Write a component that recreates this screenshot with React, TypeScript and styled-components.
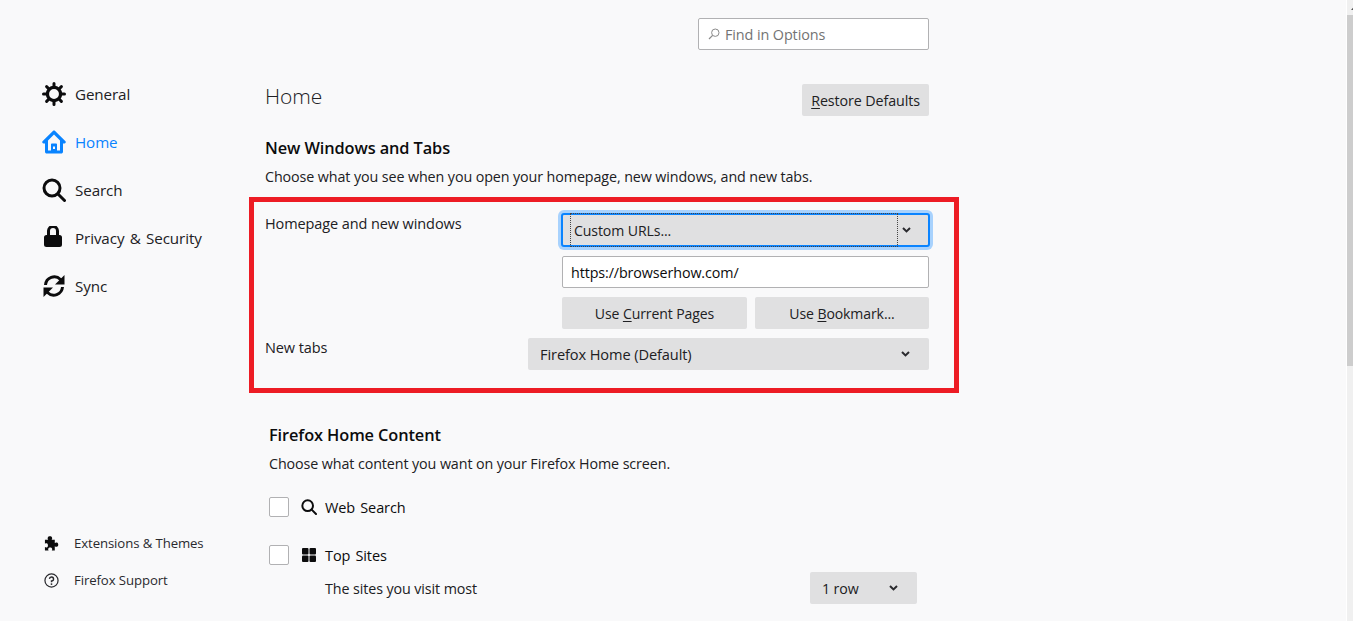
import React from 'react';
import styled, { createGlobalStyle } from 'styled-components';

const Global = createGlobalStyle`
  html, body { margin: 0; padding: 0; height: 621px; overflow: hidden; background: #f9f9fa; }
  body { font-family: "Open Sans", "Noto Sans", "Liberation Sans", sans-serif; color: #0c0c0d; }
  * { box-sizing: border-box; }
`;

const Page = styled.div`
  position: relative;
  display: flex;
  width: 1353px;
  height: 621px;
  overflow: hidden;
  background: #f9f9fa;
  font-size: 14px;
  letter-spacing: -0.1px;
`;

const Sidebar = styled.nav`
  flex: 0 0 265px;
  display: flex;
  flex-direction: column;
  justify-content: space-between;
  padding: 70px 0 29px 42px;
`;

const NavGroup = styled.div`
  display: flex;
  flex-direction: column;
`;

const NavItem = styled.div<{ $active?: boolean }>`
  display: flex;
  align-items: center;
  height: 48px;
  font-size: 15.2px;
  word-spacing: 1.5px;
  color: ${p => (p.$active ? '#0a84ff' : '#202023')};
`;

const NavIcon = styled.span`
  flex: 0 0 33px;
  display: flex;
  align-items: center;
`;

const FooterGroup = styled.div`
  display: flex;
  flex-direction: column;
  gap: 13px;
`;

const FooterItem = styled.div`
  display: flex;
  align-items: center;
  height: 24px;
  font-size: 13.2px;
  color: #2a2a2e;
`;

const FooterIcon = styled.span`
  flex: 0 0 32px;
  display: flex;
  align-items: center;
  padding-left: 2px;
`;

const Main = styled.main`
  flex: 0 0 664px;
  display: flex;
  flex-direction: column;
  padding-top: 18px;
`;

const SearchBox = styled.div`
  align-self: flex-end;
  display: flex;
  align-items: center;
  gap: 5px;
  width: 231px;
  height: 32px;
  padding-left: 9px;
  background: #fff;
  border: 1px solid #b1b1b3;
  border-radius: 2px;
  font-size: 14.4px;
  color: #737373;
`;

const TitleRow = styled.div`
  display: flex;
  justify-content: space-between;
  align-items: center;
  margin-top: 34px;
  height: 32px;
`;

const PageTitle = styled.h1`
  margin: 0 0 8px;
  font-size: 21px;
  font-weight: 300;
  color: #202023;
`;

const Button = styled.button<{ $grow?: number }>`
  ${p => (p.$grow ? `flex: 0 0 ${p.$grow}px;` : '')}
  height: 32px;
  padding: 0 9px;
  border: 0;
  border-radius: 2px;
  background: #e0e0e1;
  color: #202023;
  font: inherit;
  font-size: 14.3px;
  letter-spacing: -0.1px;
  u { text-underline-offset: 2px; }
`;

const SectionHeading = styled.h2<{ $indent?: number; $top: number }>`
  margin: ${p => p.$top}px 0 0 ${p => p.$indent ?? 0}px;
  font-size: 16.35px;
  line-height: 24px;
  font-weight: 600;
  color: #0c0c0d;
`;

const Description = styled.p<{ $indent?: number }>`
  margin: 6px 0 0 ${p => p.$indent ?? 0}px;
  font-size: 14.3px;
  line-height: 22px;
  color: #202023;
`;

const HomeGrid = styled.div`
  display: grid;
  grid-template-columns: 263px 34px 367px;
  margin-top: 26px;
`;

const RowLabel = styled.div<{ $row: number }>`
  grid-column: 1;
  grid-row: ${p => p.$row};
  font-size: 14.5px;
  line-height: 20px;
  color: #202023;
`;

const SelectBase = styled.div`
  position: relative;
  display: flex;
  align-items: center;
  justify-content: space-between;
  height: 32px;
  border-radius: 2px;
  background: #e0e0e1;
  font-size: 14px;
  color: #202023;
`;

const FocusSelect = styled(SelectBase)`
  grid-column: 3;
  grid-row: 1;
  height: 34px;
  margin: -1px;
  border: 2px solid #0a84ff;
  border-radius: 3px;
  box-shadow: 0 0 0 3px #a8d2fd;
  padding-left: 11px;
  font-size: 14.1px;
`;

const FocusInner = styled.span`
  position: absolute;
  left: 7px;
  right: 30px;
  top: -2px;
  bottom: -2px;
  border: 1px dotted #444;
`;

const InlineArrow = styled.span`
  display: flex;
  width: 30px;
  justify-content: center;
  padding-right: 14px;
`;

const UrlInput = styled.div`
  grid-column: 3;
  grid-row: 2;
  display: flex;
  align-items: center;
  height: 32px;
  margin-top: 10px;
  padding-left: 8px;
  background: #fff;
  border: 1px solid #b1b1b3;
  border-radius: 2px;
  font-size: 14.3px;
  color: #0c0c0d;
`;

const ButtonRow = styled.div`
  grid-column: 3;
  grid-row: 3;
  display: flex;
  justify-content: space-between;
  margin-top: 9px;
  button { font-size: 14.05px; }
`;

const NewTabsSelect = styled(SelectBase)`
  grid-column: 2 / 4;
  grid-row: 4;
  margin-top: 9px;
  padding: 0 19px 0 12px;
  font-size: 14.6px;
`;

const NewTabsLabel = styled(RowLabel)`
  margin-top: 9px;
`;

const CheckRow = styled.div<{ $top: number }>`
  display: flex;
  align-items: center;
  height: 20px;
  margin: ${p => p.$top}px 0 0 4px;
  font-size: 14.5px;
  font-weight: 500;
  word-spacing: 1.5px;
  color: #0c0c0d;
`;

const Checkbox = styled.span`
  flex: 0 0 20px;
  height: 20px;
  background: #fff;
  border: 1px solid #b1b1b3;
  border-radius: 2px;
  margin-right: 12px;
`;

const CheckIcon = styled.span`
  flex: 0 0 24px;
  display: flex;
  align-items: center;
`;

const SubRow = styled.div`
  display: flex;
  align-items: center;
  justify-content: space-between;
  margin: 7px 12px 0 60px;
  font-size: 14.3px;
  color: #202023;
`;

const RowSelect = styled(SelectBase)`
  width: 107px;
  padding: 0 19px 0 12px;
  font-size: 14.2px;
`;

const ScrollTrack = styled.div`
  position: absolute;
  top: 0;
  right: 0;
  bottom: 0;
  width: 7px;
  border-left: 1px solid #fff;
  background: #f0f0f0;
  display: flex;
  flex-direction: column;
`;

const ScrollButton = styled.div`
  height: 15px;
  overflow: hidden;
`;

const ScrollThumb = styled.div`
  height: 351px;
  background: #cdcdcd;
`;

const Annotation = styled.div`
  position: absolute;
  left: 249px;
  top: 197px;
  width: 710px;
  height: 196px;
  border: 5px solid #ed1c24;
  pointer-events: none;
`;

const Chevron = () => (
  <svg width="9" height="6" viewBox="0 0 9 6">
    <path d="M1 1 4.500 4.400 8 1" fill="none" stroke="#2a2a2e" strokeWidth="2" />
  </svg>
);

const Gear = () => (
  <svg width="24" height="24" viewBox="0 0 24 24" fill="none" stroke="#0c0c0d">
    <circle cx="12" cy="12" r="6.600" strokeWidth="3.300" />
    <path
      d="M12 5V1.500M12 19v3.500M5 12H1.500M19 12h3.500M7 7 4.600 4.600M17 7l2.400-2.400M7 17l-2.400 2.400M17 17l2.400 2.400"
      strokeWidth="3"
      strokeLinecap="round"
    />
  </svg>
);

const HomeIcon = () => (
  <svg width="24" height="24" viewBox="0 0 24 24">
    <path
      fill="#0a84ff"
      fillRule="evenodd"
      d="M12 .5c.4 0 .8.2 1.100.4l10.400 10.400c.6.700.2 2.200-1 2.200H21v8.200c0 1-.8 1.800-1.800 1.800H4.800C3.800 23.500 3 22.700 3 21.700v-8.200H1.500c-1.200 0-1.600-1.500-1-2.200L10.900.9c.3-.2.700-.4 1.100-.4zM12 4.500 6 10.500V20.500h3v-6c0-.6.500-1 1-1h4c.5 0 1 .4 1 1v6h3V10.500zM11 16.500v2.500h2v-2.500z"
    />
  </svg>
);

const SearchIcon = ({ size = 24 }: { size?: number }) => (
  <svg width={size} height={size} viewBox="0 0 24 24">
    <circle cx="10" cy="10" r="8" fill="none" stroke="#0c0c0d" strokeWidth="3" />
    <path d="M16 16l6.500 6.500" stroke="#0c0c0d" strokeWidth="3" strokeLinecap="round" />
  </svg>
);

const LockIcon = () => (
  <svg width="24" height="24" viewBox="0 2 24 24">
    <path
      fill="#0c0c0d"
      fillRule="evenodd"
      d="M11 1a6 6 0 0 0-6 6v4H4.500A2.500 2.500 0 0 0 2 13.500v7A2.500 2.500 0 0 0 4.500 23h13a2.500 2.500 0 0 0 2.500-2.500v-7a2.500 2.500 0 0 0-2.500-2.500H17V7a6 6 0 0 0-6-6zm0 3a3 3 0 0 1 3 3v4H8V7a3 3 0 0 1 3-3z"
    />
  </svg>
);

const SyncIcon = () => (
  <svg width="24" height="24" viewBox="0 0 24 24" fill="none">
    <path d="M3.500 11A8.800 8.800 0 0 1 18.500 5.500L21 8" stroke="#0c0c0d" strokeWidth="3" />
    <path d="M22.500 1v9.500H13z" fill="#0c0c0d" />
    <path d="M20.500 13A8.800 8.800 0 0 1 5.500 18.500L3 16" stroke="#0c0c0d" strokeWidth="3" />
    <path d="M1.500 23v-9.500H11z" fill="#0c0c0d" />
  </svg>
);

const PuzzleIcon = () => (
  <svg width="15" height="15" viewBox="0 0 16 16">
    <path
      fill="#0c0c0d"
      d="M1 4h3.500c-.6-.9-.7-1.500-.5-2.200C4.300.8 5.200.300 6.300.300s2 .5 2.300 1.500c.2.700.1 1.300-.5 2.200H11.500v3.400c.9-.6 1.500-.7 2.200-.5 1 .3 1.500 1.200 1.500 2.300s-.5 2-1.500 2.300c-.7.200-1.300.1-2.200-.5V15.500H8.300c.5-.8.600-1.300.4-1.900-.3-.9-1.100-1.300-2.100-1.300s-1.800.4-2.100 1.300c-.2.600-.1 1.100.4 1.900H1v-3.700c.8.500 1.300.6 1.900.4.900-.3 1.300-1.100 1.300-2.100S3.800 8.100 2.900 7.800c-.6-.2-1.100-.1-1.900.4z"
    />
  </svg>
);

const HelpIcon = () => (
  <svg width="15" height="15" viewBox="0 0 16 16" fill="none">
    <circle cx="8" cy="8" r="7" stroke="#2a2a2e" strokeWidth="1.300" />
    <path d="M5.800 6.200A2.200 2.200 0 1 1 8 8.600v1.200" stroke="#2a2a2e" strokeWidth="1.500" />
    <circle cx="8" cy="11.800" r="1" fill="#2a2a2e" />
  </svg>
);

const FindIcon = () => (
  <svg width="12" height="12" viewBox="0 0 12 12" fill="none">
    <circle cx="7.300" cy="4.700" r="3.700" stroke="#8a8a8a" strokeWidth="1" />
    <path d="M4.600 7.400 1 11" stroke="#8a8a8a" strokeWidth="1.200" />
  </svg>
);

const TilesIcon = () => (
  <svg width="16" height="16" viewBox="0 0 16 16" fill="#0c0c0d">
    <rect x="1" y="1" width="6.500" height="6.500" rx="1" />
    <rect x="8.500" y="1" width="6.500" height="6.500" rx="1" />
    <rect x="1" y="8.500" width="6.500" height="6.500" rx="1" />
    <rect x="8.500" y="8.500" width="6.500" height="6.500" rx="1" />
  </svg>
);

const ArrowUp = () => (
  <svg width="6" height="15" viewBox="0 0 6 15">
    <path d="M4 10 8 5.500 12 10z" fill="#555" />
  </svg>
);

export default function App() {
  return (
    <Page>
      <Global />
      <Sidebar>
        <NavGroup>
          <NavItem><NavIcon><Gear /></NavIcon>General</NavItem>
          <NavItem $active><NavIcon><HomeIcon /></NavIcon>Home</NavItem>
          <NavItem><NavIcon><SearchIcon /></NavIcon>Search</NavItem>
          <NavItem><NavIcon><LockIcon /></NavIcon>Privacy &amp; Security</NavItem>
          <NavItem><NavIcon><SyncIcon /></NavIcon>Sync</NavItem>
        </NavGroup>
        <FooterGroup>
          <FooterItem><FooterIcon><PuzzleIcon /></FooterIcon>Extensions &amp; Themes</FooterItem>
          <FooterItem><FooterIcon><HelpIcon /></FooterIcon>Firefox Support</FooterItem>
        </FooterGroup>
      </Sidebar>
      <Main>
        <SearchBox><FindIcon />Find in Options</SearchBox>
        <TitleRow>
          <PageTitle>Home</PageTitle>
          <Button><u>R</u>estore Defaults</Button>
        </TitleRow>
        <SectionHeading $top={20}>New Windows and Tabs</SectionHeading>
        <Description>Choose what you see when you open your homepage, new windows, and new tabs.</Description>
        <HomeGrid>
          <RowLabel $row={1}>Homepage and new windows</RowLabel>
          <FocusSelect>
            <FocusInner />
            <span>Custom URLs...</span>
            <InlineArrow><Chevron /></InlineArrow>
          </FocusSelect>
          <UrlInput>https://browserhow.com/</UrlInput>
          <ButtonRow>
            <Button $grow={185}>Use <u>C</u>urrent Pages</Button>
            <Button $grow={174}>Use <u>B</u>ookmark...</Button>
          </ButtonRow>
          <NewTabsLabel $row={4}>New tabs</NewTabsLabel>
          <NewTabsSelect>
            <span>Firefox Home (Default)</span>
            <Chevron />
          </NewTabsSelect>
        </HomeGrid>
        <SectionHeading $top={53} $indent={4}>Firefox Home Content</SectionHeading>
        <Description $indent={4}>Choose what content you want on your Firefox Home screen.</Description>
        <CheckRow $top={22}>
          <Checkbox />
          <CheckIcon><SearchIcon size={16} /></CheckIcon>
          Web Search
        </CheckRow>
        <CheckRow $top={28}>
          <Checkbox />
          <CheckIcon><TilesIcon /></CheckIcon>
          Top Sites
        </CheckRow>
        <SubRow>
          <span>The sites you visit most</span>
          <RowSelect>
            <span>1 row</span>
            <Chevron />
          </RowSelect>
        </SubRow>
      </Main>
      <ScrollTrack>
        <ScrollButton><ArrowUp /></ScrollButton>
        <ScrollThumb />
      </ScrollTrack>
      <Annotation />
    </Page>
  );
}
